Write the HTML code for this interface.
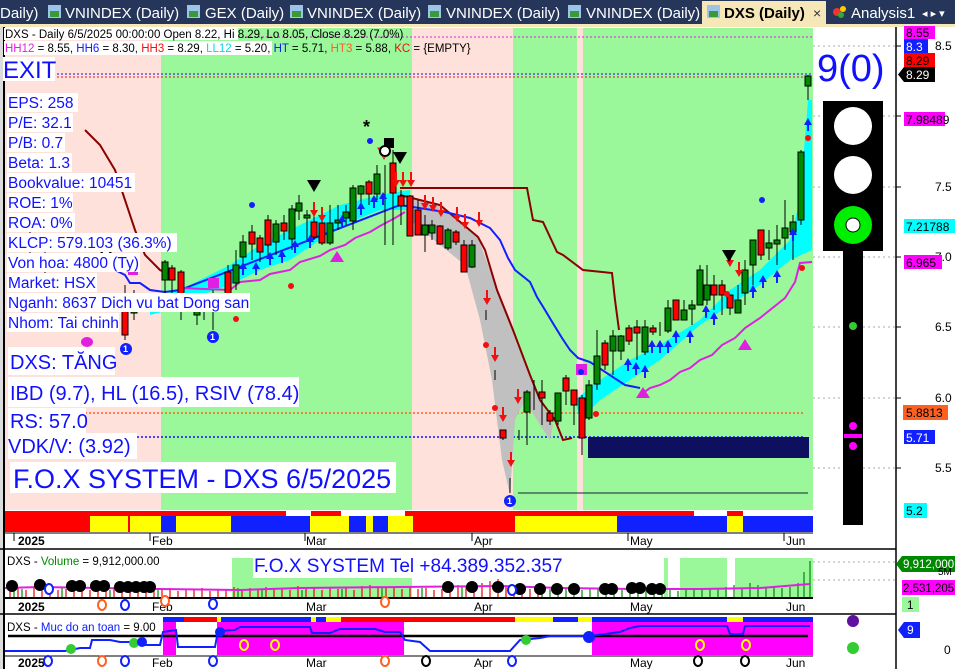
<!DOCTYPE html>
<html><head><meta charset="utf-8"><style>
html,body{margin:0;padding:0;background:#fff;width:955px;height:669px;overflow:hidden}
svg{display:block;font-family:"Liberation Sans",sans-serif}
</style></head><body>
<svg width="955" height="669" viewBox="0 0 955 669" xmlns="http://www.w3.org/2000/svg">
<!-- tab bar -->
<rect x="0" y="0" width="955" height="26" fill="#26365a"/>
<rect x="0" y="24" width="955" height="3" fill="#f6e7b8"/>
<g font-size="15" fill="#fff">
<text x="0" y="18">Daily)</text>
<rect x="48" y="5" width="13" height="13" fill="#9cc3e8"/><rect x="50" y="11" width="9" height="6" fill="#3a9a3a"/>
<text x="65" y="18">VNINDEX (Daily)</text>
<rect x="187" y="5" width="13" height="13" fill="#9cc3e8"/><rect x="189" y="11" width="9" height="6" fill="#3a9a3a"/>
<text x="205" y="18">GEX (Daily)</text>
<rect x="290" y="5" width="13" height="13" fill="#9cc3e8"/><rect x="292" y="11" width="9" height="6" fill="#3a9a3a"/>
<text x="307" y="18">VNINDEX (Daily)</text>
<rect x="428" y="5" width="13" height="13" fill="#9cc3e8"/><rect x="430" y="11" width="9" height="6" fill="#3a9a3a"/>
<text x="446" y="18">VNINDEX (Daily)</text>
<rect x="568" y="5" width="13" height="13" fill="#9cc3e8"/><rect x="570" y="11" width="9" height="6" fill="#3a9a3a"/>
<text x="586" y="18">VNINDEX (Daily)</text>
</g>
<rect x="702" y="1" width="124" height="25" fill="#f6e7b8"/>
<rect x="707" y="5" width="13" height="13" fill="#9cc3e8"/><rect x="709" y="11" width="9" height="6" fill="#3a9a3a"/>
<text x="724" y="18" font-size="15" font-weight="bold" fill="#000">DXS (Daily)</text>
<text x="813" y="18" font-size="14" fill="#333">×</text>
<circle cx="837" cy="12" r="4" fill="#e33"/><circle cx="843" cy="9" r="3" fill="#fc0"/><circle cx="841" cy="15" r="3" fill="#3a3"/>
<text x="851" y="18" font-size="15" fill="#fff">Analysis1</text>
<text x="922" y="17" font-size="11" fill="#fff">◂ ▸ ▾</text>

<!-- chart left border -->
<rect x="0" y="27" width="4" height="642" fill="#dcdcdc"/>
<rect x="3" y="27" width="2" height="642" fill="#000"/>

<!-- main backgrounds -->
<rect x="5" y="28" width="808" height="482" fill="#ffe1dc"/>
<rect x="161" y="28" width="251" height="482" fill="#9af89a"/>
<rect x="513" y="28" width="64" height="482" fill="#9af89a"/>
<rect x="583" y="28" width="230" height="482" fill="#9af89a"/>

<!-- right grid dotted -->
<g stroke="#aaa" stroke-dasharray="2,3" stroke-width="1">
<line x1="813" y1="46" x2="896" y2="46"/><line x1="813" y1="116" x2="896" y2="116"/>
<line x1="813" y1="187" x2="896" y2="187"/><line x1="813" y1="257" x2="896" y2="257"/>
<line x1="813" y1="327" x2="896" y2="327"/><line x1="813" y1="398" x2="896" y2="398"/>
<line x1="813" y1="468" x2="896" y2="468"/>
</g>

<!-- dotted horizontals -->
<line x1="238" y1="37" x2="812" y2="37" stroke="#e020e0" stroke-dasharray="2,2"/>
<line x1="57" y1="74" x2="812" y2="74" stroke="#1010ff" stroke-dasharray="2,2"/>
<line x1="57" y1="77" x2="812" y2="77" stroke="#f01010" stroke-dasharray="2,2"/>
<line x1="85" y1="413" x2="805" y2="413" stroke="#ff6020" stroke-dasharray="2,2" stroke-width="1.5"/>
<line x1="137" y1="437" x2="805" y2="437" stroke="#1010ff" stroke-dasharray="2,2" stroke-width="1.5"/>
<rect x="588" y="437" width="221" height="21" fill="#0f0f60"/>
<line x1="518" y1="493" x2="808" y2="493" stroke="#123" stroke-width="1"/>

<!-- cyan bands -->
<polygon points="150,300 190,285 230,265 260,245 300,225 340,205 380,195 410,190 410,210 380,210 350,222 320,240 290,260 260,270 230,285 200,295 170,310 150,315" fill="#00ffff"/>
<polygon points="575,400 600,380 630,360 660,345 700,320 730,290 760,270 790,240 800,200 808,100 812,100 812,250 790,260 760,285 730,305 700,325 660,360 630,380 600,400 580,420" fill="#00ffff"/>
<!-- gray band -->
<polygon points="400,195 440,205 478,237 497,290 513,330 540,400 553,425 550,440 540,425 525,400 515,420 510,495 502,460 492,380 480,320 465,265 440,245 410,220" fill="#c0c0c0"/>

<!-- brown stepped line -->
<polyline points="85,130 100,145 115,170 125,200 135,230 145,255 160,270 170,275" fill="none" stroke="#8b0000" stroke-width="2"/>
<polyline points="400,188 527,188 533,220 543,222 557,252 563,255 583,270 612,273 615,300 619,330" fill="none" stroke="#8b0000" stroke-width="2"/>
<polyline points="400,195 440,205 478,237 485,250 497,290 513,330 530,375 540,400 555,420 563,440 572,438" fill="none" stroke="#8b0000" stroke-width="2"/>
<!-- blue stepped line -->
<polyline points="115,270 125,275 130,283 140,283 150,290 165,292 180,290 400,205 445,212 470,218 490,228 500,240 508,258 515,270 530,282 537,297 545,310 554,325 562,338 570,350 578,358 590,362 625,385 640,388" fill="none" stroke="#1020ff" stroke-width="2"/>
<!-- magenta stepped line -->
<polyline points="180,288 230,290 240,282 260,280 270,274 290,270 300,262 320,256 330,250 345,245 355,238 370,232 380,226 395,218 405,212" fill="none" stroke="#e020e0" stroke-width="2"/>
<polyline points="640,395 650,388 660,385 670,380 680,372 690,368 700,360 712,355 722,345 735,338 745,328 760,318 775,306 785,298 795,282 800,263 812,262" fill="none" stroke="#e020e0" stroke-width="2"/>

<!-- candles -->
<g stroke="#000" stroke-width="1">
<line x1="30" y1="230" x2="30" y2="260"/><line x1="45" y1="250" x2="45" y2="290"/>
<line x1="125" y1="285" x2="125" y2="340"/><rect x="122" y="300" width="6" height="35" fill="#f00"/>
<line x1="134" y1="290" x2="134" y2="320"/><rect x="131" y="298" width="6" height="15" fill="#080"/>
<line x1="165" y1="260" x2="165" y2="300"/><rect x="162" y="262" width="6" height="18" fill="#080"/>
<line x1="172" y1="265" x2="172" y2="295"/><rect x="169" y="268" width="6" height="12" fill="#f00"/>
<line x1="181" y1="270" x2="181" y2="320"/><rect x="178" y="272" width="6" height="25" fill="#f00"/>
<line x1="197" y1="300" x2="197" y2="325"/><rect x="194" y="303" width="6" height="12" fill="#080"/>
<line x1="204" y1="295" x2="204" y2="320"/><rect x="201" y="299" width="6" height="6" fill="#f00"/>
<line x1="213" y1="290" x2="213" y2="330"/><rect x="210" y="296" width="6" height="8" fill="#080"/>
<line x1="228" y1="265" x2="228" y2="300"/><rect x="225" y="272" width="6" height="25" fill="#f00"/>
<line x1="236" y1="250" x2="236" y2="290"/><rect x="233" y="265" width="6" height="18" fill="#080"/>
<line x1="243" y1="235" x2="243" y2="265"/><rect x="240" y="242" width="6" height="15" fill="#080"/>
<line x1="252" y1="225" x2="252" y2="260"/><rect x="249" y="232" width="6" height="12" fill="#f00"/>
<line x1="260" y1="235" x2="260" y2="262"/><rect x="257" y="238" width="6" height="14" fill="#f00"/>
<line x1="268" y1="215" x2="268" y2="255"/><rect x="265" y="220" width="6" height="25" fill="#f00"/>
<line x1="276" y1="220" x2="276" y2="255"/><rect x="273" y="224" width="6" height="18" fill="#080"/>
<line x1="284" y1="215" x2="284" y2="240"/><rect x="281" y="223" width="6" height="8" fill="#f00"/>
<line x1="292" y1="205" x2="292" y2="250"/><rect x="289" y="209" width="6" height="30" fill="#080"/>
<line x1="299" y1="195" x2="299" y2="220"/><rect x="296" y="203" width="6" height="8" fill="#080"/>
<line x1="307" y1="210" x2="307" y2="240"/><rect x="304" y="215" width="6" height="3" fill="#080"/>
<line x1="314" y1="210" x2="314" y2="240"/><rect x="311" y="222" width="6" height="15" fill="#f00"/>
<line x1="322" y1="220" x2="322" y2="245"/><rect x="319" y="223" width="6" height="20" fill="#f00"/>
<line x1="330" y1="205" x2="330" y2="245"/><rect x="327" y="223" width="6" height="20" fill="#080"/>
<line x1="338" y1="205" x2="338" y2="230"/><rect x="335" y="220" width="6" height="3" fill="#080"/>
<line x1="346" y1="205" x2="346" y2="225"/><rect x="343" y="212" width="6" height="6" fill="#080"/>
<line x1="353" y1="185" x2="353" y2="230"/><rect x="350" y="188" width="6" height="33" fill="#080"/>
<line x1="361" y1="185" x2="361" y2="215"/><rect x="358" y="186" width="6" height="8" fill="#080"/>
<line x1="369" y1="180" x2="369" y2="205"/><rect x="366" y="182" width="6" height="12" fill="#f00"/>
<line x1="377" y1="165" x2="377" y2="200"/><rect x="374" y="174" width="6" height="20" fill="#080"/>
<line x1="385" y1="165" x2="385" y2="245"/>
<line x1="393" y1="150" x2="393" y2="245"/><rect x="390" y="163" width="6" height="30" fill="#f00"/>
<line x1="401" y1="190" x2="401" y2="225"/><rect x="398" y="196" width="6" height="10" fill="#f00"/>
<line x1="410" y1="195" x2="410" y2="225"/><rect x="407" y="196" width="6" height="40" fill="#f00"/>
<line x1="418" y1="200" x2="418" y2="235"/><rect x="415" y="210" width="6" height="25" fill="#f00"/>
<line x1="425" y1="215" x2="425" y2="252"/><rect x="422" y="225" width="6" height="10" fill="#080"/>
<line x1="432" y1="220" x2="432" y2="240"/><rect x="429" y="225" width="6" height="8" fill="#080"/>
<line x1="440" y1="225" x2="440" y2="245"/><rect x="437" y="226" width="6" height="18" fill="#f00"/>
<line x1="448" y1="228" x2="448" y2="250"/><rect x="445" y="230" width="6" height="18" fill="#080"/>
<line x1="456" y1="230" x2="456" y2="245"/><rect x="453" y="232" width="6" height="10" fill="#f00"/>
<line x1="464" y1="240" x2="464" y2="272"/><rect x="461" y="245" width="6" height="27" fill="#f00"/>
<line x1="472" y1="240" x2="472" y2="268"/><rect x="469" y="245" width="6" height="22" fill="#080"/>
<line x1="486" y1="310" x2="486" y2="320"/>
<line x1="495" y1="370" x2="495" y2="380"/>
<line x1="503" y1="430" x2="503" y2="440"/><rect x="500" y="430" width="6" height="8" fill="#f00"/>
<line x1="510" y1="478" x2="510" y2="493"/>
<line x1="519" y1="430" x2="519" y2="440"/>
<line x1="527" y1="390" x2="527" y2="445"/><rect x="524" y="392" width="6" height="20" fill="#080"/>
<line x1="534" y1="380" x2="534" y2="410"/>
<line x1="542" y1="380" x2="542" y2="425"/><rect x="539" y="392" width="6" height="6" fill="#f00"/>
<line x1="550" y1="410" x2="550" y2="425"/><rect x="547" y="413" width="6" height="8" fill="#f00"/>
<line x1="558" y1="395" x2="558" y2="425"/><rect x="555" y="393" width="6" height="28" fill="#080"/>
<line x1="566" y1="375" x2="566" y2="405"/><rect x="563" y="378" width="6" height="13" fill="#f00"/>
<line x1="574" y1="390" x2="574" y2="425"/><rect x="571" y="390" width="6" height="15" fill="#f00"/>
<line x1="582" y1="395" x2="582" y2="455"/><rect x="579" y="398" width="6" height="40" fill="#f00"/>
<line x1="589" y1="380" x2="589" y2="420"/><rect x="586" y="385" width="6" height="33" fill="#080"/>
<line x1="597" y1="330" x2="597" y2="390"/><rect x="594" y="356" width="6" height="28" fill="#080"/>
<line x1="605" y1="340" x2="605" y2="370"/><rect x="602" y="343" width="6" height="22" fill="#f00"/>
<line x1="613" y1="330" x2="613" y2="375"/><rect x="610" y="336" width="6" height="15" fill="#080"/>
<line x1="621" y1="335" x2="621" y2="360"/><rect x="618" y="336" width="6" height="15" fill="#080"/>
<line x1="629" y1="325" x2="629" y2="345"/><rect x="626" y="328" width="6" height="13" fill="#f00"/>
<line x1="637" y1="320" x2="637" y2="360"/><rect x="634" y="327" width="6" height="6" fill="#f00"/>
<line x1="645" y1="320" x2="645" y2="355"/><rect x="642" y="327" width="6" height="25" fill="#080"/>
<line x1="653" y1="325" x2="653" y2="335"/><rect x="650" y="328" width="6" height="4" fill="#f00"/>
<line x1="660" y1="322" x2="660" y2="336"/>
<line x1="668" y1="300" x2="668" y2="333"/><rect x="665" y="308" width="6" height="23" fill="#080"/>
<line x1="676" y1="300" x2="676" y2="320"/><rect x="673" y="300" width="6" height="20" fill="#f00"/>
<line x1="684" y1="300" x2="684" y2="320"/><rect x="681" y="310" width="6" height="10" fill="#080"/>
<line x1="692" y1="300" x2="692" y2="325"/><rect x="689" y="305" width="6" height="4" fill="#080"/>
<line x1="700" y1="265" x2="700" y2="305"/><rect x="697" y="270" width="6" height="35" fill="#080"/>
<line x1="707" y1="265" x2="707" y2="305"/><rect x="704" y="285" width="6" height="15" fill="#080"/>
<line x1="714" y1="275" x2="714" y2="310"/><rect x="711" y="285" width="6" height="10" fill="#f00"/>
<line x1="722" y1="280" x2="722" y2="315"/><rect x="719" y="285" width="6" height="10" fill="#f00"/>
<line x1="730" y1="300" x2="730" y2="315"/><rect x="727" y="295" width="6" height="13" fill="#f00"/>
<line x1="738" y1="285" x2="738" y2="312"/><rect x="735" y="300" width="6" height="13" fill="#080"/>
<line x1="745" y1="260" x2="745" y2="305"/><rect x="742" y="270" width="6" height="23" fill="#080"/>
<line x1="753" y1="240" x2="753" y2="285"/><rect x="750" y="240" width="6" height="25" fill="#080"/>
<line x1="761" y1="230" x2="761" y2="260"/><rect x="758" y="230" width="6" height="25" fill="#f00"/>
<line x1="769" y1="230" x2="769" y2="260"/><rect x="766" y="243" width="6" height="5" fill="#080"/>
<line x1="777" y1="225" x2="777" y2="265"/><rect x="774" y="240" width="6" height="4" fill="#080"/>
<line x1="785" y1="200" x2="785" y2="250"/><rect x="782" y="228" width="6" height="10" fill="#080"/>
<line x1="793" y1="215" x2="793" y2="260"/><rect x="790" y="222" width="6" height="10" fill="#080"/>
<line x1="801" y1="150" x2="801" y2="225"/><rect x="798" y="152" width="6" height="68" fill="#080"/>
<line x1="808" y1="75" x2="808" y2="100"/><rect x="805" y="76" width="6" height="10" fill="#080"/>
</g>

<!-- arrows / markers -->
<g fill="#1020ff">
<path d="M243 262 l-4 7 h3 v6 h2 v-6 h3z"/><path d="M256 262 l-4 7 h3 v6 h2 v-6 h3z"/><path d="M270 252 l-4 7 h3 v6 h2 v-6 h3z"/><path d="M282 250 l-4 7 h3 v6 h2 v-6 h3z"/><path d="M295 240 l-4 7 h3 v6 h2 v-6 h3z"/><path d="M310 235 l-4 7 h3 v6 h2 v-6 h3z"/><path d="M342 215 l-4 7 h3 v6 h2 v-6 h3z"/><path d="M361 202 l-4 7 h3 v6 h2 v-6 h3z"/><path d="M374 195 l-4 7 h3 v6 h2 v-6 h3z"/><path d="M383 192 l-4 7 h3 v6 h2 v-6 h3z"/>
<path d="M628 358 l-4 7 h3 v6 h2 v-6 h3z"/><path d="M636 362 l-4 7 h3 v6 h2 v-6 h3z"/><path d="M645 365 l-4 7 h3 v6 h2 v-6 h3z"/><path d="M652 340 l-4 7 h3 v6 h2 v-6 h3z"/><path d="M660 340 l-4 7 h3 v6 h2 v-6 h3z"/><path d="M668 340 l-4 7 h3 v6 h2 v-6 h3z"/><path d="M676 330 l-4 7 h3 v6 h2 v-6 h3z"/><path d="M690 330 l-4 7 h3 v6 h2 v-6 h3z"/><path d="M706 305 l-4 7 h3 v6 h2 v-6 h3z"/><path d="M714 312 l-4 7 h3 v6 h2 v-6 h3z"/><path d="M753 285 l-4 7 h3 v6 h2 v-6 h3z"/><path d="M763 275 l-4 7 h3 v6 h2 v-6 h3z"/><path d="M777 270 l-4 7 h3 v6 h2 v-6 h3z"/><path d="M793 228 l-4 7 h3 v6 h2 v-6 h3z"/><path d="M808 118 l-4 7 h3 v6 h2 v-6 h3z"/>
<circle cx="252" cy="205" r="3"/><circle cx="370" cy="141" r="3"/><circle cx="762" cy="200" r="3"/>
</g>
<g fill="#f01010">
<path d="M313 210 v-8 h2 v8 h3 l-4 7 l-4 -7z"/><path d="M321 215 v-8 h2 v8 h3 l-4 7 l-4 -7z"/><path d="M395 180 v-8 h2 v8 h3 l-4 7 l-4 -7z"/><path d="M402 180 v-8 h2 v8 h3 l-4 7 l-4 -7z"/><path d="M410 180 v-8 h2 v8 h3 l-4 7 l-4 -7z"/><path d="M424 203 v-8 h2 v8 h3 l-4 7 l-4 -7z"/><path d="M432 205 v-8 h2 v8 h3 l-4 7 l-4 -7z"/><path d="M440 210 v-8 h2 v8 h3 l-4 7 l-4 -7z"/><path d="M456 215 v-8 h2 v8 h3 l-4 7 l-4 -7z"/><path d="M464 222 v-8 h2 v8 h3 l-4 7 l-4 -7z"/><path d="M478 220 v-8 h2 v8 h3 l-4 7 l-4 -7z"/><path d="M486 298 v-8 h2 v8 h3 l-4 7 l-4 -7z"/><path d="M494 355 v-8 h2 v8 h3 l-4 7 l-4 -7z"/><path d="M502 415 v-8 h2 v8 h3 l-4 7 l-4 -7z"/><path d="M510 460 v-8 h2 v8 h3 l-4 7 l-4 -7z"/><path d="M517 397 v-8 h2 v8 h3 l-4 7 l-4 -7z"/><path d="M729 260 v-8 h2 v8 h3 l-4 7 l-4 -7z"/><path d="M738 270 v-8 h2 v8 h3 l-4 7 l-4 -7z"/>
<circle cx="486" cy="345" r="3"/><circle cx="495" cy="408" r="3"/><circle cx="596" cy="414" r="3"/><circle cx="727" cy="294" r="3"/><circle cx="802" cy="268" r="3"/><circle cx="808" cy="138" r="3"/><circle cx="205" cy="309" r="3"/><circle cx="236" cy="319" r="3"/><circle cx="291" cy="286" r="3"/>
</g>
<g fill="#000">
<path d="M307 180 h14 l-7 12z"/><path d="M393 152 h14 l-7 12z"/><path d="M722 250 h14 l-7 12z"/>
</g>
<text x="363" y="133" font-size="18" font-weight="bold">*</text>
<rect x="384" y="138" width="10" height="10" fill="#000"/>
<path d="M378 148 h12 l-6 11z" fill="none" stroke="#f01010"/>
<circle cx="385" cy="151" r="5" fill="#fff" stroke="#000" stroke-width="2"/>
<circle cx="106" cy="250" r="5" fill="#fff" stroke="#000" stroke-width="2"/>
<g fill="#e020e0">
<path d="M330 262 h14 l-7 -11z"/><path d="M636 398 h14 l-7 -11z"/><path d="M738 350 h14 l-7 -11z"/>
<rect x="128" y="265" width="10" height="10"/><rect x="208" y="278" width="11" height="10"/><rect x="576" y="364" width="11" height="11"/><ellipse cx="87" cy="342" rx="6" ry="5"/>
</g>
<circle cx="581" cy="372" r="3" fill="#1020ff"/>
<g fill="#1020ff"><circle cx="126" cy="349" r="6"/><circle cx="213" cy="337" r="6"/><circle cx="510" cy="501" r="6"/></g>
<g fill="#fff" font-size="9" font-weight="bold"><text x="123" y="352">1</text><text x="210" y="340">1</text><text x="507" y="504">1</text></g>

<!-- header text -->
<rect x="4" y="28" width="234" height="12" fill="#fff"/>
<text x="5" y="38" font-size="11.5" fill="#000">DXS - Daily 6/5/2025 00:00:00 Open 8.22, Hi 8.29, Lo 8.05, Close 8.29 (7.0%)</text>
<rect x="4" y="41" width="268" height="14" fill="#fff"/>
<text x="5" y="52" font-size="11.5"><tspan fill="#e020e0">HH12</tspan><tspan fill="#000"> = 8.55, </tspan><tspan fill="#1020ff">HH6</tspan><tspan fill="#000"> = 8.30, </tspan><tspan fill="#f01010">HH3</tspan><tspan fill="#000"> = 8.29, </tspan><tspan fill="#00d8e8">LL12</tspan><tspan fill="#000"> = 5.20, </tspan><tspan fill="#1020ff">HT</tspan><tspan fill="#000">  = 5.71, </tspan><tspan fill="#ff6020">HT3</tspan><tspan fill="#000">  = 5.88, </tspan><tspan fill="#f01010">KC</tspan><tspan fill="#000"> = {EMPTY}</tspan></text>
<rect x="3" y="57" width="52" height="24" fill="#fff"/>
<text x="3" y="78" font-size="24" fill="#1010ff">EXIT</text>

<!-- left info boxes -->
<g fill="#fff">
<rect x="7" y="93" width="71" height="19"/><rect x="7" y="113" width="66" height="19"/><rect x="7" y="133" width="58" height="19"/><rect x="7" y="153" width="65" height="19"/><rect x="7" y="173" width="128" height="19"/><rect x="7" y="193" width="66" height="19"/><rect x="7" y="213" width="68" height="19"/><rect x="7" y="233" width="170" height="19"/><rect x="7" y="253" width="133" height="19"/><rect x="7" y="273" width="90" height="19"/><rect x="7" y="293" width="243" height="19"/><rect x="7" y="313" width="112" height="19"/>
<rect x="8" y="347" width="107" height="28"/><rect x="8" y="377" width="291" height="30"/><rect x="8" y="408" width="78" height="25"/><rect x="8" y="433" width="129" height="26"/><rect x="10" y="462" width="386" height="31"/>
</g>
<g fill="#1010ff" font-size="15.5">
<text x="8" y="108">EPS: 258</text><text x="8" y="128">P/E: 32.1</text><text x="8" y="148">P/B: 0.7</text><text x="8" y="168">Beta: 1.3</text><text x="8" y="188">Bookvalue: 10451</text><text x="8" y="208">ROE: 1%</text><text x="8" y="228">ROA: 0%</text><text x="8" y="248">KLCP: 579.103 (36.3%)</text><text x="8" y="268">Von hoa: 4800 (Ty)</text><text x="8" y="288">Market: HSX</text><text x="8" y="308">Nganh: 8637 Dich vu bat Dong san</text><text x="8" y="328">Nhom: Tai chinh</text>
</g>
<g fill="#1010ff" font-size="20">
<text x="10" y="369">DXS: TĂNG</text><text x="10" y="400">IBD (9.7), HL (16.5), RSIV (78.4)</text><text x="10" y="428">RS: 57.0</text><text x="8" y="453">VDK/V:  (3.92)</text>
</g>
<text x="13" y="488" font-size="27" fill="#1010ff">F.O.X SYSTEM - DXS 6/5/2025</text>

<!-- color bar -->
<rect x="5" y="510" width="808" height="22" fill="#fff"/>
<g>
<rect x="5" y="511" width="281" height="5" fill="#f00"/><rect x="311" y="511" width="30" height="5" fill="#f00"/><rect x="405" y="511" width="289" height="5" fill="#f00"/><rect x="727" y="511" width="16" height="5" fill="#f00"/>
<rect x="5" y="516" width="85" height="16" fill="#f00"/><rect x="90" y="516" width="38" height="16" fill="#ff0"/><rect x="128" y="516" width="2" height="16" fill="#f00"/><rect x="130" y="516" width="31" height="16" fill="#ff0"/><rect x="161" y="516" width="15" height="16" fill="#1020ff"/><rect x="176" y="516" width="55" height="16" fill="#ff0"/><rect x="231" y="516" width="79" height="16" fill="#1020ff"/><rect x="310" y="516" width="39" height="16" fill="#ff0"/><rect x="349" y="516" width="17" height="16" fill="#1020ff"/><rect x="366" y="516" width="7" height="16" fill="#ff0"/><rect x="373" y="516" width="15" height="16" fill="#1020ff"/><rect x="388" y="516" width="25" height="16" fill="#ff0"/><rect x="413" y="516" width="102" height="16" fill="#f00"/><rect x="515" y="516" width="102" height="16" fill="#ff0"/><rect x="617" y="516" width="110" height="16" fill="#1020ff"/><rect x="727" y="516" width="16" height="16" fill="#ff0"/><rect x="743" y="516" width="70" height="16" fill="#1020ff"/>
</g>
<line x1="5" y1="533" x2="813" y2="533" stroke="#000"/>
<g font-size="12" fill="#000">
<text x="18" y="545" font-weight="bold">2025</text><text x="152" y="545">Feb</text><text x="306" y="545">Mar</text><text x="474" y="545">Apr</text><text x="630" y="545">May</text><text x="786" y="545">Jun</text>
</g>
<g stroke="#000"><line x1="14" y1="533" x2="14" y2="541"/><line x1="150" y1="533" x2="150" y2="541"/><line x1="305" y1="533" x2="305" y2="541"/><line x1="472" y1="533" x2="472" y2="541"/><line x1="628" y1="533" x2="628" y2="541"/><line x1="784" y1="533" x2="784" y2="541"/></g>
<line x1="0" y1="549" x2="896" y2="549" stroke="#000" stroke-width="1.5"/>

<!-- traffic light -->
<rect x="823" y="101" width="60" height="150" fill="#000"/>
<rect x="843" y="251" width="20" height="274" fill="#000"/>
<circle cx="853" cy="126" r="19" fill="#fff"/><circle cx="853" cy="175" r="19" fill="#fff"/>
<circle cx="853" cy="225" r="19" fill="#00ee00"/><circle cx="853" cy="225" r="7" fill="#fff" stroke="#000"/>
<circle cx="853" cy="326" r="4" fill="#3c3"/>
<circle cx="853" cy="426" r="4" fill="#f0f"/><rect x="844" y="434" width="18" height="4" fill="#f0f"/><circle cx="853" cy="446" r="4" fill="#f0f"/>
<text x="817" y="81" font-size="38" fill="#1010ff">9(0)</text>

<!-- right axis -->
<line x1="896" y1="27" x2="896" y2="669" stroke="#000" stroke-width="1.5"/>
<g stroke="#000"><line x1="896" y1="46" x2="901" y2="46"/><line x1="896" y1="116" x2="901" y2="116"/><line x1="896" y1="187" x2="901" y2="187"/><line x1="896" y1="257" x2="901" y2="257"/><line x1="896" y1="327" x2="901" y2="327"/><line x1="896" y1="398" x2="901" y2="398"/><line x1="896" y1="468" x2="901" y2="468"/></g>
<g font-size="12" fill="#000">
<text x="935" y="50">8.5</text><text x="935" y="191">7.5</text><text x="935" y="261">7.0</text><text x="935" y="331">6.5</text><text x="935" y="402">6.0</text><text x="935" y="472">5.5</text>
</g>
<g font-size="12">
<rect x="904" y="26" width="31" height="13" fill="#f0f"/><text x="906" y="37">8.55</text>
<rect x="904" y="39" width="24" height="14" fill="#1020ff"/><text x="906" y="51" fill="#fff">8.3</text>
<rect x="904" y="53" width="31" height="14" fill="#f00"/><text x="906" y="65">8.29</text>
<path d="M904 67 h31 v15 h-31 l-6 -7.5z" fill="#000"/><text x="906" y="79" fill="#fff">8.29</text>
<rect x="904" y="112" width="41" height="14" fill="#f0f"/><text x="906" y="124">7.98489</text>
<rect x="904" y="219" width="51" height="14" fill="#00ffff"/><text x="906" y="231">7.21788</text>
<rect x="904" y="255" width="38" height="14" fill="#f0f"/><text x="906" y="267">6.965</text>
<rect x="903" y="405" width="45" height="15" fill="#ff6020"/><text x="906" y="417">5.8813</text>
<rect x="904" y="430" width="31" height="14" fill="#1020ff"/><text x="906" y="442" fill="#fff">5.71</text>
<rect x="904" y="503" width="23" height="15" fill="#00ffff"/><text x="906" y="515">5.2</text>
</g>

<!-- volume panel -->
<rect x="232" y="558" width="180" height="40" fill="#9af89a"/>
<rect x="664" y="558" width="4" height="40" fill="#9af89a"/><rect x="680" y="558" width="47" height="40" fill="#9af89a"/><rect x="735" y="558" width="78" height="40" fill="#9af89a"/>
<rect x="253" y="555" width="159" height="23" fill="#fff"/>
<text x="254" y="572" font-size="19" fill="#1010ff">F.O.X SYSTEM Tel +84.389.352.357</text>
<text x="7" y="565" font-size="11.5"><tspan fill="#000">DXS - </tspan><tspan fill="#080">Volume</tspan><tspan fill="#000"> = 9,912,000.00</tspan></text>
<g stroke-dasharray="2,3" stroke="#aaa"><line x1="813" y1="562" x2="896" y2="562"/><line x1="813" y1="580" x2="896" y2="580"/></g>
<g stroke-width="1.2">
<path d="M10 597v-8M18 597v-10M26 597v-7M34 597v-9M42 597v-6M50 597v-10M58 597v-7M66 597v-8M74 597v-6M82 597v-9M90 597v-7M98 597v-8M106 597v-6M114 597v-10M122 597v-8M130 597v-7M138 597v-9M146 597v-6M154 597v-8M162 597v-7M170 597v-9M178 597v-6M186 597v-8M194 597v-7M202 597v-9M210 597v-6M218 597v-8M226 597v-7M234 597v-10M242 597v-8M250 597v-9M258 597v-7M266 597v-10M274 597v-8M282 597v-9M290 597v-7M298 597v-11M306 597v-8M314 597v-9M322 597v-7M330 597v-10M338 597v-8M346 597v-9M354 597v-7M362 597v-11M370 597v-12M378 597v-10M386 597v-10M394 597v-9M402 597v-8M410 597v-10M418 597v-8M426 597v-9M434 597v-7M442 597v-8M450 597v-10M458 597v-12M466 597v-10M474 597v-9M482 597v-14M490 597v-16M498 597v-18M506 597v-12M514 597v-10M522 597v-9M530 597v-8M538 597v-9" stroke="#e00"/>
<path d="M14 597v-6M22 597v-8M62 597v-9M110 597v-7M158 597v-8M238 597v-9M262 597v-8M302 597v-7M342 597v-8M382 597v-10M422 597v-9M462 597v-11M542 597v-9M550 597v-8M558 597v-10M566 597v-9M574 597v-8M582 597v-7M590 597v-9M598 597v-8M606 597v-9M614 597v-8M622 597v-7M630 597v-9M638 597v-8M646 597v-9M654 597v-10M662 597v-8M670 597v-7M678 597v-6M686 597v-8M694 597v-7M702 597v-9M710 597v-8M718 597v-9M726 597v-10M734 597v-12M742 597v-8M750 597v-14M758 597v-12M766 597v-10M774 597v-11M782 597v-9M790 597v-10M798 597v-14M804 597v-25M810 597v-36" stroke="#080"/>
</g>
<polyline points="5,588 40,587 100,588 160,589 240,590 300,588 400,587 500,586 560,588 640,589 700,589 760,588 810,584" fill="none" stroke="#e020e0" stroke-width="2"/>
<g fill="#000">
<circle cx="12" cy="586" r="6"/><circle cx="40" cy="585" r="6"/><circle cx="72" cy="586" r="6"/><circle cx="80" cy="586" r="6"/><circle cx="96" cy="586" r="6"/><circle cx="104" cy="586" r="6"/><circle cx="120" cy="587" r="6"/><circle cx="128" cy="587" r="6"/><circle cx="136" cy="587" r="6"/><circle cx="144" cy="587" r="6"/><circle cx="150" cy="587" r="6"/>
<circle cx="448" cy="587" r="6"/><circle cx="472" cy="587" r="6"/><circle cx="498" cy="587" r="6"/><circle cx="520" cy="589" r="6"/><circle cx="540" cy="589" r="6"/><circle cx="557" cy="589" r="6"/><circle cx="574" cy="589" r="6"/><circle cx="605" cy="589" r="6"/><circle cx="612" cy="589" r="6"/><circle cx="632" cy="588" r="6"/><circle cx="640" cy="588" r="6"/><circle cx="652" cy="589" r="6"/><circle cx="660" cy="589" r="6"/>
</g>
<line x1="5" y1="598" x2="813" y2="598" stroke="#000" stroke-width="2"/>
<path d="M902 556 h53 v16 h-53 l-6 -8z" fill="#080"/><text x="903" y="568" font-size="11.5" fill="#fff">9,912,000</text>
<rect x="902" y="580" width="53" height="15" fill="#f0f"/><text x="903" y="592" font-size="11.5" fill="#000">2,531,205</text>
<text x="938" y="575" font-size="10" fill="#000">5M</text>
<rect x="902" y="597" width="17" height="15" fill="#9af89a"/><text x="907" y="609" font-size="11.5" fill="#000">1</text>
<g font-size="12" fill="#000">
<text x="18" y="611" font-weight="bold">2025</text><text x="152" y="611">Feb</text><text x="306" y="611">Mar</text><text x="474" y="611">Apr</text><text x="630" y="611">May</text><text x="786" y="611">Jun</text>
</g>
<g fill="#fff" stroke-width="2" font-size="10" font-weight="bold">
<ellipse cx="49" cy="589" rx="4" ry="5" stroke="#1020ff"/>
<ellipse cx="102" cy="605" rx="4" ry="5" stroke="#ff6020"/><ellipse cx="125" cy="605" rx="4" ry="5" stroke="#1020ff"/><ellipse cx="165" cy="601" rx="4" ry="5" stroke="#ff6020"/><ellipse cx="213" cy="604" rx="4" ry="5" stroke="#1020ff"/><ellipse cx="385" cy="602" rx="4" ry="5" stroke="#ff6020"/><ellipse cx="512" cy="590" rx="4" ry="5" stroke="#1020ff"/>
</g>
<line x1="0" y1="614" x2="896" y2="614" stroke="#000" stroke-width="1.5"/>

<!-- safety panel -->
<rect x="163" y="617" width="21" height="5" fill="#1020ff"/><rect x="184" y="617" width="33" height="5" fill="#f00"/><rect x="217" y="617" width="4" height="5" fill="#ff0"/><rect x="221" y="617" width="90" height="5" fill="#1020ff"/><rect x="311" y="617" width="5" height="5" fill="#ff0"/><rect x="316" y="617" width="10" height="5" fill="#1020ff"/><rect x="326" y="617" width="15" height="5" fill="#ff0"/><rect x="341" y="617" width="174" height="5" fill="#f00"/><rect x="515" y="617" width="38" height="5" fill="#ff0"/><rect x="553" y="617" width="25" height="5" fill="#1020ff"/><rect x="578" y="617" width="14" height="5" fill="#ff0"/><rect x="592" y="617" width="135" height="5" fill="#1020ff"/><rect x="727" y="617" width="16" height="5" fill="#ff0"/><rect x="743" y="617" width="70" height="5" fill="#1020ff"/>
<rect x="163" y="622" width="13" height="33" fill="#f0f"/><rect x="217" y="622" width="187" height="33" fill="#f0f"/><rect x="592" y="622" width="221" height="33" fill="#f0f"/>
<text x="7" y="631" font-size="11.5"><tspan fill="#000">DXS - </tspan><tspan fill="#1020ff">Muc do an toan</tspan><tspan fill="#000"> = 9.00</tspan></text>
<line x1="8" y1="636" x2="808" y2="636" stroke="#000" stroke-width="2.5"/>
<polyline points="5,651 65,651 80,648 90,648 92,640 110,640 120,642 135,642 140,645 160,645 163,632 176,630 178,647 215,647 218,631 235,630 240,627 310,627 312,633 330,633 340,629 375,629 385,632 400,632 405,640 420,642 430,651 510,651 520,640 540,638 550,636 590,636 620,632 630,628 640,626 727,626 730,634 743,634 745,626 810,626" fill="none" stroke="#1020ff" stroke-width="2"/>
<circle cx="71" cy="649" r="5" fill="#3c3"/><circle cx="134" cy="643" r="5" fill="#3c3"/><circle cx="142" cy="642" r="5" fill="#1020ff"/><circle cx="220" cy="632" r="5" fill="#1020ff"/><circle cx="526" cy="640" r="5" fill="#3c3"/><circle cx="589" cy="637" r="6" fill="#1020ff"/>
<g fill="#f0f" stroke="#ff0" stroke-width="2"><ellipse cx="244" cy="645" rx="4" ry="5"/><ellipse cx="275" cy="645" rx="4" ry="5"/><ellipse cx="700" cy="645" rx="4" ry="5"/><ellipse cx="746" cy="645" rx="4" ry="5"/></g>
<line x1="5" y1="656" x2="813" y2="656" stroke="#000"/>
<circle cx="853" cy="621" r="6" fill="#6010a0"/><circle cx="853" cy="648" r="6" fill="#3c3"/>
<path d="M904 622 h16 v16 h-16 l-6 -8z" fill="#1020ff"/><text x="907" y="634" font-size="12" fill="#fff">9</text>
<text x="944" y="654" font-size="12" fill="#000">0</text>
<g font-size="12" fill="#000">
<text x="18" y="667" font-weight="bold">2025</text><text x="152" y="667">Feb</text><text x="306" y="667">Mar</text><text x="474" y="667">Apr</text><text x="630" y="667">May</text><text x="786" y="667">Jun</text>
</g>
<g fill="#fff" stroke-width="2">
<ellipse cx="48" cy="661" rx="4" ry="5" stroke="#1020ff"/><ellipse cx="102" cy="661" rx="4" ry="5" stroke="#ff6020"/><ellipse cx="125" cy="661" rx="4" ry="5" stroke="#1020ff"/><ellipse cx="213" cy="661" rx="4" ry="5" stroke="#1020ff"/><ellipse cx="385" cy="661" rx="4" ry="5" stroke="#ff6020"/><ellipse cx="426" cy="661" rx="4" ry="5" stroke="#000"/><ellipse cx="512" cy="661" rx="4" ry="5" stroke="#1020ff"/><ellipse cx="698" cy="661" rx="4" ry="5" stroke="#000"/><ellipse cx="745" cy="661" rx="4" ry="5" stroke="#000"/>
</g>
</svg>
</body></html>
